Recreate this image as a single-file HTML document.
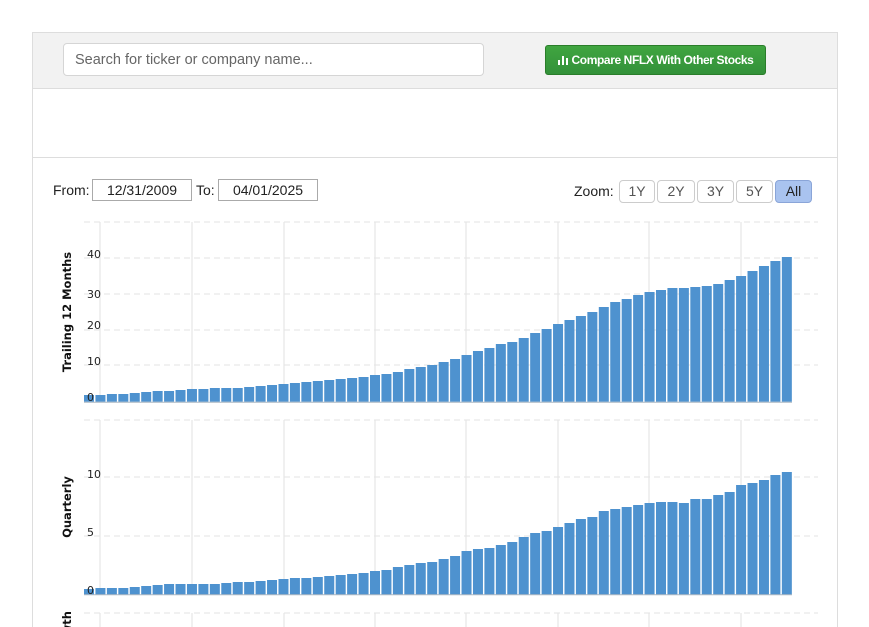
<!DOCTYPE html>
<html style="height:627px;overflow:hidden"><head><meta charset="utf-8"><style>
body{margin:0;width:869px;height:627px;overflow:hidden;background:#fff;font-family:"Liberation Sans",Arial,sans-serif;position:relative}
.box{position:absolute;left:32px;top:32px;width:804px;height:600px;border:1px solid #ddd;border-bottom:none}
.hdr{position:absolute;left:0;top:0;width:804px;height:55px;background:#f2f2f2;border-bottom:1px solid #ddd}
.search{position:absolute;left:30px;top:10px;width:421px;height:33px;background:#fff;border:1px solid #d5d5d5;border-radius:4px;box-sizing:border-box;padding-left:11px;line-height:32px;font-size:14.5px;color:#666}
.btn{position:absolute;left:512px;top:12px;width:221px;height:30px;box-sizing:border-box;border:1px solid #2a7d2a;border-radius:3px;background:linear-gradient(#40a540,#33913a);color:#fff;font-size:12px;font-weight:bold;line-height:28px;text-align:center;letter-spacing:-0.4px}
.sep{position:absolute;left:0;top:124px;width:804px;border-top:1px solid #ddd}
.lbl{position:absolute;font-size:14px;color:#222}
.inp{position:absolute;top:146px;height:22px;box-sizing:border-box;border:1px solid #aaa;font-size:14px;text-align:center;line-height:20px;color:#222}
.z{position:absolute;top:147px;height:23px;box-sizing:border-box;border:1px solid #ccc;border-radius:4px;font-size:14px;text-align:center;line-height:21px;color:#555;background:#fff}
</style></head><body>
<div class="box">
<div class="hdr">
<div class="search">Search for ticker or company name...</div>
<div class="btn"><svg width="10" height="10" style="vertical-align:-1px;margin-right:4px"><rect x="0" y="5" width="2" height="5" fill="#fff"/><rect x="4" y="1" width="2" height="9" fill="#fff"/><rect x="8" y="3" width="2" height="7" fill="#fff"/></svg>Compare NFLX With Other Stocks</div>
</div>
<div class="sep"></div>
<div class="lbl" style="left:20px;top:149px">From:</div>
<div class="inp" style="left:59px;width:100px">12/31/2009</div>
<div class="lbl" style="left:163px;top:149px">To:</div>
<div class="inp" style="left:185px;width:100px">04/01/2025</div>
<div class="lbl" style="left:541px;top:150px">Zoom:</div>
<div class="z" style="left:586px;width:36px">1Y</div>
<div class="z" style="left:624px;width:38px">2Y</div>
<div class="z" style="left:664px;width:37px">3Y</div>
<div class="z" style="left:703px;width:37px">5Y</div>
<div class="z" style="left:742px;width:37px;background:#a9c3ef;border-color:#8aa5d8;color:#222">All</div>
</div>
<svg id="c" width="869" height="627" style="position:absolute;left:0;top:0" font-family="DejaVu Sans,Verdana,sans-serif"></svg>
<script>
var t1=[6.7,6.7,7.7,7.7,8.7,9.7,10.7,10.7,11.7,12.7,12.7,13.7,13.7,13.7,14.7,15.7,16.7,17.7,18.7,19.7,20.7,21.7,22.7,23.7,24.7,26.7,27.7,29.7,32.7,34.7,36.7,39.7,42.7,46.7,50.7,53.7,57.7,59.7,63.7,68.7,72.7,77.7,81.7,85.7,89.7,94.7,99.7,102.7,106.7,109.7,111.7,113.7,113.7,114.7,115.7,117.7,121.7,125.7,130.7,135.7,140.7,144.7];
var t2=[5.3,6.3,6.3,6.3,7.3,8.3,9.3,10.3,10.3,10.3,10.3,10.3,11.3,12.3,12.3,13.3,14.3,15.3,16.3,16.3,17.3,18.3,19.3,20.3,21.3,23.3,24.3,27.3,29.3,31.3,32.3,35.3,38.3,43.3,45.3,46.3,49.3,52.3,57.3,61.3,63.3,67.3,71.3,75.3,77.3,83.3,85.3,87.3,89.3,91.3,92.3,92.3,91.3,95.3,95.3,99.3,102.3,109.3,111.3,114.3,119.3,122.3];
var s='';
var vx=[100,192,284,375,466,558,649,741];
function grid(y0,y1){vx.forEach(function(x){s+='<line x1="'+x+'" y1="'+y0+'" x2="'+x+'" y2="'+y1+'" stroke="#e2e2e2"/>';});}
function h(y){s+='<line x1="84" y1="'+y+'" x2="818" y2="'+y+'" stroke="#e3e3e3" stroke-dasharray="6,4"/>';}
grid(222,401);grid(420,594);grid(613,627);
[222,258,294,330,365].forEach(h);[420,477,536].forEach(h);h(613);
function bars(a,z){a.forEach(function(v,i){var x=84+i*11.44;s+='<rect x="'+x.toFixed(2)+'" y="'+(z-v).toFixed(1)+'" width="10" height="'+v+'" fill="#4e92cf"/>';});s+='<line x1="84" y1="'+(z+0.5)+'" x2="792" y2="'+(z+0.5)+'" stroke="#5a7085" stroke-opacity=".5"/>';}
bars(t1,401.7);bars(t2,594.3);
function t(x,y,tx){s+='<text x="'+x+'" y="'+y+'" font-size="11" fill="#222">'+tx+'</text>';}
t(87,258,'40');t(87,298,'30');t(87,329,'20');t(87,365,'10');t(87,401,'0');
t(87,478,'10');t(87,536,'5');t(87,594,'0');
function yl(y,tx,a){s+='<text transform="translate(71,'+y+') rotate(-90)" text-anchor="'+a+'" font-size="11.5" font-weight="bold" fill="#111">'+tx+'</text>';}
yl(312,'Trailing 12 Months','middle');yl(507,'Quarterly','middle');yl(611,'Growth','end');
document.getElementById('c').innerHTML=s;
</script>
</body></html>
